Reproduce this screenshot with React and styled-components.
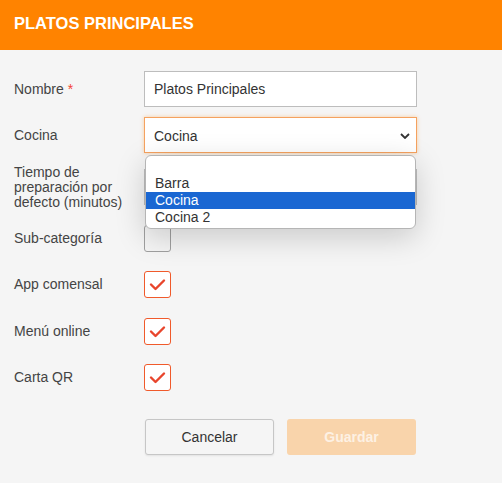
import React from "react";
import styled, { createGlobalStyle } from "styled-components";

const GlobalStyle = createGlobalStyle`
  html, body {
    margin: 0;
    padding: 0;
    background: #f5f5f5;
    font-family: "Liberation Sans", Arial, sans-serif;
    color: #444;
  }
  * { box-sizing: border-box; }
`;

const options = ["", "Barra", "Cocina", "Cocina 2"];

function Check() {
  return (
    <svg width="27" height="27" viewBox="0 0 27 27">
      <path
        d="M7 13.5 L11.5 18 L20 9.5"
        fill="none"
        stroke="#e8452c"
        strokeWidth="2.4"
        strokeLinecap="round"
        strokeLinejoin="round"
      />
    </svg>
  );
}

function App() {
  return (
    <Page>
      <GlobalStyle />
      <Header>
        <h1>PLATOS PRINCIPALES</h1>
      </Header>
      <Form>
        <Row>
          <Label>
            Nombre <Req>*</Req>
          </Label>
          <Input defaultValue="Platos Principales" />
        </Row>
        <Row gap={10}>
          <Label>Cocina</Label>
          <SelectWrap>
            <Select>
              <span>Cocina</span>
              <Chevron viewBox="0 0 10 6">
                <path d="M1 1 L5 5 L9 1" fill="none" stroke="#333" strokeWidth="1.8" />
              </Chevron>
            </Select>
            <Dropdown>
              {options.map((o, i) => (
                <Option key={i} active={o === "Cocina"}>
                  {o}
                </Option>
              ))}
            </Dropdown>
          </SelectWrap>
        </Row>
        <Row gap={10} height={48}>
          <Label>Tiempo de preparación por defecto (minutos)</Label>
          <Input defaultValue="" />
        </Row>
        <Row gap={14} height={27}>
          <Label>Sub-categoría</Label>
          <Box />
        </Row>
        <Row gap={19} height={27}>
          <Label>App comensal</Label>
          <Box checked>
            <Check />
          </Box>
        </Row>
        <Row gap={20} height={27}>
          <Label>Menú online</Label>
          <Box checked>
            <Check />
          </Box>
        </Row>
        <Row gap={19} height={27}>
          <Label>Carta QR</Label>
          <Box checked>
            <Check />
          </Box>
        </Row>
        <Actions>
          <Cancel>Cancelar</Cancel>
          <Save>Guardar</Save>
        </Actions>
      </Form>
    </Page>
  );
}

export default App;

const Page = styled.div`
  width: 502px;
  min-height: 483px;
  background: #f5f5f5;
`;

const Header = styled.div`
  height: 50px;
  background: #ff8300;
  display: flex;
  align-items: center;
  padding: 0 14px 3px;

  h1 {
    margin: 0;
    color: #fff;
    font-size: 16.5px;
    font-weight: 700;
  }
`;

const Form = styled.div`
  padding: 21px 0 0 14px;
  display: flex;
  flex-direction: column;
`;

const Row = styled.div`
  display: grid;
  grid-template-columns: 130px 273px;
  align-items: center;
  margin-top: ${(p) => p.gap || 0}px;
  height: ${(p) => (p.height ? p.height + "px" : "auto")};
`;

const Label = styled.div`
  font-size: 14px;
  line-height: 15px;
  color: #444;
  padding-right: 8px;
`;

const Req = styled.span`
  color: #f44336;
`;

const Input = styled.input`
  height: 36px;
  width: 273px;
  border: 1px solid #bdbdbd;
  background: #fff;
  padding: 0 9px;
  font-family: inherit;
  font-size: 14px;
  color: #333;
  outline: none;
`;

const SelectWrap = styled.div`
  position: relative;
`;

const Select = styled.div`
  height: 36px;
  border: 1px solid #f5a25f;
  box-shadow: 0 0 4px rgba(255, 131, 0, 0.35);
  background: #fff;
  display: flex;
  align-items: center;
  justify-content: space-between;
  padding: 1px 6px 0 9px;
  font-size: 14px;
  color: #333;
`;

const Chevron = styled.svg`
  width: 10px;
  height: 6px;
`;

const Dropdown = styled.div`
  position: absolute;
  left: 1px;
  top: 38px;
  width: 271px;
  background: #fff;
  border: 1px solid #b5b5b5;
  border-radius: 6px;
  padding: 2px 0;
  box-shadow: 0 8px 30px rgba(0, 0, 0, 0.18);
  z-index: 5;
  overflow: hidden;
`;

const Option = styled.div`
  height: 17px;
  line-height: 17px;
  padding: 0 9px;
  font-size: 14px;
  color: ${(p) => (p.active ? "#fff" : "#333")};
  background: ${(p) => (p.active ? "#1a67d2" : "transparent")};
`;

const Box = styled.div`
  width: 27px;
  height: 27px;
  border: 1px solid ${(p) => (p.checked ? "#f05a2b" : "#a0a0a0")};
  border-radius: 3px;
  background: ${(p) => (p.checked ? "#fff" : "transparent")};
  display: flex;
  align-items: center;
  justify-content: center;

  svg {
    margin: -1px;
  }
`;

const Actions = styled.div`
  display: flex;
  gap: 13px;
  margin: 28px 0 0 131px;
`;

const ButtonBase = styled.button`
  width: 129px;
  height: 36px;
  border-radius: 3px;
  font-family: inherit;
  font-size: 14px;
`;

const Cancel = styled(ButtonBase)`
  background: #f5f5f5;
  border: 1px solid #c6c6c6;
  color: #333;
  box-shadow: 0 1px 2px rgba(0, 0, 0, 0.08);
`;

const Save = styled(ButtonBase)`
  background: #f9d4ab;
  border: none;
  color: #fdf1e4;
  font-weight: 700;
`;
